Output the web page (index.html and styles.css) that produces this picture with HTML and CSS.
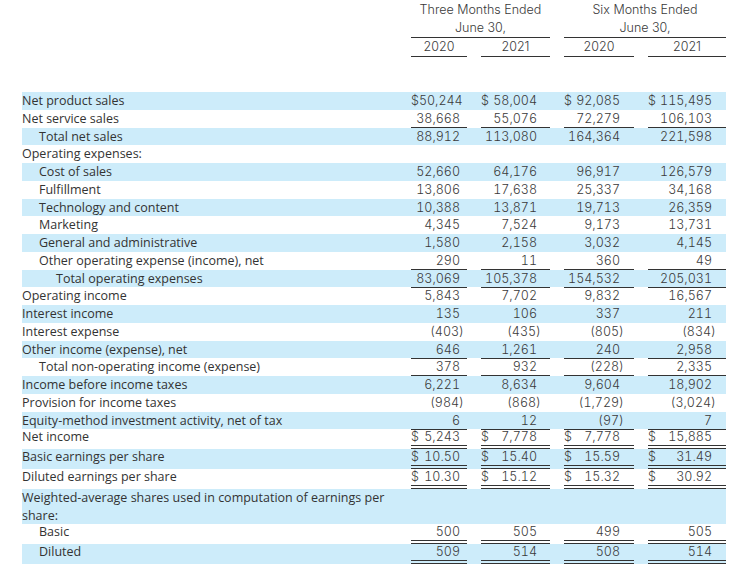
FILE: index.html
```html
<!DOCTYPE html>
<html lang="en">
<head>
<meta charset="utf-8">
<title>Consolidated Statements of Operations</title>
<link rel="stylesheet" href="styles.css">
</head>
<body>
<div class="sheet">
  <div class="head">
    <div class="grp g1">Three Months Ended<br>June 30,</div>
    <div class="grp g2">Six Months Ended<br>June 30,</div>
    <div class="yr c1">2020</div>
    <div class="yr c2">2021</div>
    <div class="yr c3">2020</div>
    <div class="yr c4">2021</div>
  </div>

  <div class="body">
    <div class="row blue">
      <div class="lbl">Net product sales</div>
      <div class="num c1"><span>$</span><span>50,244</span></div>
      <div class="num c2"><span>$</span><span>58,004</span></div>
      <div class="num c3"><span>$</span><span>92,085</span></div>
      <div class="num c4"><span>$</span><span>115,495</span></div>
    </div>
    <div class="row u">
      <div class="lbl">Net service sales</div>
      <div class="num c1"><span class="v">38,668</span></div>
      <div class="num c2"><span class="v">55,076</span></div>
      <div class="num c3"><span class="v">72,279</span></div>
      <div class="num c4"><span class="v">106,103</span></div>
    </div>
    <div class="row blue">
      <div class="lbl i1">Total net sales</div>
      <div class="num c1"><span class="v">88,912</span></div>
      <div class="num c2"><span class="v">113,080</span></div>
      <div class="num c3"><span class="v">164,364</span></div>
      <div class="num c4"><span class="v">221,598</span></div>
    </div>
    <div class="row">
      <div class="lbl">Operating expenses:</div>
    </div>
    <div class="row blue">
      <div class="lbl i1">Cost of sales</div>
      <div class="num c1"><span class="v">52,660</span></div>
      <div class="num c2"><span class="v">64,176</span></div>
      <div class="num c3"><span class="v">96,917</span></div>
      <div class="num c4"><span class="v">126,579</span></div>
    </div>
    <div class="row">
      <div class="lbl i1">Fulfillment</div>
      <div class="num c1"><span class="v">13,806</span></div>
      <div class="num c2"><span class="v">17,638</span></div>
      <div class="num c3"><span class="v">25,337</span></div>
      <div class="num c4"><span class="v">34,168</span></div>
    </div>
    <div class="row blue">
      <div class="lbl i1">Technology and content</div>
      <div class="num c1"><span class="v">10,388</span></div>
      <div class="num c2"><span class="v">13,871</span></div>
      <div class="num c3"><span class="v">19,713</span></div>
      <div class="num c4"><span class="v">26,359</span></div>
    </div>
    <div class="row">
      <div class="lbl i1">Marketing</div>
      <div class="num c1"><span class="v">4,345</span></div>
      <div class="num c2"><span class="v">7,524</span></div>
      <div class="num c3"><span class="v">9,173</span></div>
      <div class="num c4"><span class="v">13,731</span></div>
    </div>
    <div class="row blue">
      <div class="lbl i1">General and administrative</div>
      <div class="num c1"><span class="v">1,580</span></div>
      <div class="num c2"><span class="v">2,158</span></div>
      <div class="num c3"><span class="v">3,032</span></div>
      <div class="num c4"><span class="v">4,145</span></div>
    </div>
    <div class="row u">
      <div class="lbl i1">Other operating expense (income), net</div>
      <div class="num c1"><span class="v">290</span></div>
      <div class="num c2"><span class="v">11</span></div>
      <div class="num c3"><span class="v">360</span></div>
      <div class="num c4"><span class="v">49</span></div>
    </div>
    <div class="row blue u">
      <div class="lbl i2">Total operating expenses</div>
      <div class="num c1"><span class="v">83,069</span></div>
      <div class="num c2"><span class="v">105,378</span></div>
      <div class="num c3"><span class="v">154,532</span></div>
      <div class="num c4"><span class="v">205,031</span></div>
    </div>
    <div class="row">
      <div class="lbl">Operating income</div>
      <div class="num c1"><span class="v">5,843</span></div>
      <div class="num c2"><span class="v">7,702</span></div>
      <div class="num c3"><span class="v">9,832</span></div>
      <div class="num c4"><span class="v">16,567</span></div>
    </div>
    <div class="row blue">
      <div class="lbl">Interest income</div>
      <div class="num c1"><span class="v">135</span></div>
      <div class="num c2"><span class="v">106</span></div>
      <div class="num c3"><span class="v">337</span></div>
      <div class="num c4"><span class="v">211</span></div>
    </div>
    <div class="row">
      <div class="lbl">Interest expense</div>
      <div class="num c1"><span class="v neg">(403)</span></div>
      <div class="num c2"><span class="v neg">(435)</span></div>
      <div class="num c3"><span class="v neg">(805)</span></div>
      <div class="num c4"><span class="v neg">(834)</span></div>
    </div>
    <div class="row blue u">
      <div class="lbl">Other income (expense), net</div>
      <div class="num c1"><span class="v">646</span></div>
      <div class="num c2"><span class="v">1,261</span></div>
      <div class="num c3"><span class="v">240</span></div>
      <div class="num c4"><span class="v">2,958</span></div>
    </div>
    <div class="row u">
      <div class="lbl i1">Total non-operating income (expense)</div>
      <div class="num c1"><span class="v">378</span></div>
      <div class="num c2"><span class="v">932</span></div>
      <div class="num c3"><span class="v neg">(228)</span></div>
      <div class="num c4"><span class="v">2,335</span></div>
    </div>
    <div class="row blue">
      <div class="lbl">Income before income taxes</div>
      <div class="num c1"><span class="v">6,221</span></div>
      <div class="num c2"><span class="v">8,634</span></div>
      <div class="num c3"><span class="v">9,604</span></div>
      <div class="num c4"><span class="v">18,902</span></div>
    </div>
    <div class="row">
      <div class="lbl">Provision for income taxes</div>
      <div class="num c1"><span class="v neg">(984)</span></div>
      <div class="num c2"><span class="v neg">(868)</span></div>
      <div class="num c3"><span class="v neg">(1,729)</span></div>
      <div class="num c4"><span class="v neg">(3,024)</span></div>
    </div>
    <div class="row blue u">
      <div class="lbl">Equity-method investment activity, net of tax</div>
      <div class="num c1"><span class="v">6</span></div>
      <div class="num c2"><span class="v">12</span></div>
      <div class="num c3"><span class="v neg">(97)</span></div>
      <div class="num c4"><span class="v">7</span></div>
    </div>
    <div class="row uu">
      <div class="lbl">Net income</div>
      <div class="num c1"><span>$</span><span>5,243</span></div>
      <div class="num c2"><span>$</span><span>7,778</span></div>
      <div class="num c3"><span>$</span><span>7,778</span></div>
      <div class="num c4"><span>$</span><span>15,885</span></div>
    </div>
    <div class="row blue uu">
      <div class="lbl">Basic earnings per share</div>
      <div class="num c1"><span>$</span><span>10.50</span></div>
      <div class="num c2"><span>$</span><span>15.40</span></div>
      <div class="num c3"><span>$</span><span>15.59</span></div>
      <div class="num c4"><span>$</span><span>31.49</span></div>
    </div>
    <div class="row uu">
      <div class="lbl">Diluted earnings per share</div>
      <div class="num c1"><span>$</span><span>10.30</span></div>
      <div class="num c2"><span>$</span><span>15.12</span></div>
      <div class="num c3"><span>$</span><span>15.32</span></div>
      <div class="num c4"><span>$</span><span>30.92</span></div>
    </div>
    <div class="row blue wrap">
      <div class="lbl long">Weighted-average shares used in computation of earnings per share:</div>
    </div>
    <div class="row uu short">
      <div class="lbl i1">Basic</div>
      <div class="num c1"><span class="v">500</span></div>
      <div class="num c2"><span class="v">505</span></div>
      <div class="num c3"><span class="v">499</span></div>
      <div class="num c4"><span class="v">505</span></div>
    </div>
    <div class="row blue uu">
      <div class="lbl i1">Diluted</div>
      <div class="num c1"><span class="v">509</span></div>
      <div class="num c2"><span class="v">514</span></div>
      <div class="num c3"><span class="v">508</span></div>
      <div class="num c4"><span class="v">514</span></div>
    </div>
  </div>
</div>
</body>
</html>
```

FILE: styles.css
```css
html, body {
  margin: 0;
  padding: 0;
  background: #ffffff;
}

.sheet {
  margin-left: 22px;
  width: 704px;
  color: #353535;
}

.head,
.row {
  display: grid;
  grid-template-columns: 375px 56px 69px 70px 78px;
  column-gap: 14px;
}

.head {
  padding-top: 1px;
  margin-bottom: 35px;
  font-family: Inter, "Liberation Sans", sans-serif;
  font-weight: 300;
  font-size: 12.5px;
  color: #3a3a3a;
  line-height: 18px;
  text-align: center;
}

.grp {
  border-bottom: 1px solid #333;
  grid-row: 1;
}
.g1 { grid-column: 2 / 4; }
.g2 { grid-column: 4 / 6; }

.yr {
  grid-row: 2;
  border-bottom: 1px solid #333;
}
.yr.c1 { grid-column: 2; }
.yr.c2 { grid-column: 3; }
.yr.c3 { grid-column: 4; }
.yr.c4 { grid-column: 5; }

.row {
  height: 17.75px;
  line-height: 17px;
}
.row.blue {
  background: #cdecfa;
}

.lbl {
  grid-column: 1;
  font-family: "Open Sans", "Liberation Sans", sans-serif;
  font-size: 12.5px;
  white-space: nowrap;
  color: #333;
}
.lbl.i1 { padding-left: 17px; }
.lbl.i2 { padding-left: 34px; }

.num {
  box-sizing: border-box;
  height: 100%;
  display: flex;
  justify-content: space-between;
  font-family: Inter, "Liberation Sans", sans-serif;
  font-weight: 300;
  font-size: 12.5px;
  font-variant-numeric: tabular-nums;
  color: #3a3a3a;
}
.num .v { margin-left: auto; }
.num .neg { margin-right: -4px; }

.num.c1 { grid-column: 2; padding-right: 7px; }
.num.c2 { grid-column: 3; padding-right: 13px; }
.num.c3 { grid-column: 4; padding-right: 14px; }
.num.c4 { grid-column: 5; padding-right: 14px; }

.row.u .num {
  border-bottom: 1px solid #333;
}

.row.uu {
  height: 20px;
  line-height: 16px;
}
.row.uu.short {
  height: 19.5px;
}
.row.uu .num {
  border-bottom: 4px double #333;
}

.row.wrap {
  height: 35px;
  line-height: 17.5px;
}
.lbl.long {
  grid-column: 1 / 3;
  white-space: normal;
  width: 388px;
}
```
